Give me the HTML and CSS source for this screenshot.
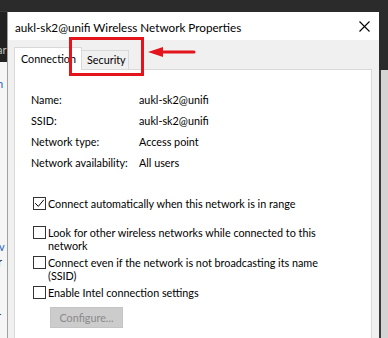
FILE: index.html
```html
<!DOCTYPE html>
<html>
<head>
<meta charset="utf-8">
<link rel="stylesheet" href="styles.css">
</head>
<body>
<div class="desk">
  <div class="bg-left-dark"><span>ar</span></div>
  <div class="bg-left-light">
    <span class="frag blue f1">n</span>
    <span class="frag blue f2">tv</span>
    <span class="frag f3">r</span>
    <span class="frag f4">r</span>
  </div>
  <div class="bg-right"></div>

  <div class="dialog">
    <div class="titlebar">
      <span class="title">aukl-sk2@unifi Wireless Network Properties</span>
      <svg class="close" width="11" height="11" viewBox="0 0 11 11"><path d="M0.5 0.5L10.5 10.5M10.5 0.5L0.5 10.5" stroke="#000" stroke-width="1.1" fill="none"/></svg>
    </div>
    <div class="body">
      <div class="tabs">
        <div class="tab active">Connection</div>
        <div class="tab sec">Security</div>
      </div>
      <div class="panel">
        <div class="info">
          <span>Name:</span><span>aukl-sk2@unifi</span>
          <span>SSID:</span><span>aukl-sk2@unifi</span>
          <span>Network type:</span><span>Access point</span>
          <span>Network availability:</span><span>All users</span>
        </div>
        <div class="checks">
          <div class="check first">
            <span class="box"><svg width="11" height="11" viewBox="0 0 11 11"><path d="M1.2 5.2L4.3 8.4L9.8 1.8" stroke="#000" stroke-width="1" fill="none"/></svg></span>
            <span class="lbl">Connect automatically when this network is in range</span>
          </div>
          <div class="check">
            <span class="box"></span>
            <span class="lbl">Look for other wireless networks while connected to this<br>network</span>
          </div>
          <div class="check">
            <span class="box"></span>
            <span class="lbl">Connect even if the network is not broadcasting its name<br>(SSID)</span>
          </div>
          <div class="check">
            <span class="box"></span>
            <span class="lbl">Enable Intel connection settings</span>
          </div>
        </div>
        <button class="btn" disabled>Configure...</button>
      </div>
    </div>
  </div>

  <div class="highlight"></div>
  <svg class="arrow" width="50" height="14" viewBox="0 0 50 14"><path d="M14 7H47" stroke="#e3141b" stroke-width="3" stroke-linecap="round"/><path d="M1 7L16 2V12Z" fill="#e3141b"/></svg>
</div>
</body>
</html>
```
FILE: styles.css
```css
* { box-sizing: border-box; }
html, body { margin: 0; padding: 0; }
body {
  width: 388px;
  height: 338px;
  overflow: hidden;
  background: #2b2b2b;
  font-family: "Lato", "Segoe UI", sans-serif;
  font-size: 10.8px;
  color: #000;
}
.desk { position: relative; width: 388px; height: 338px; }

.bg-left-dark {
  position: absolute; left: 0; top: 11px; width: 8px; height: 51px;
  background: #222;
  border-top: 1px solid #3a3a3a;
  color: #c4c4c4;
  overflow: hidden;
}
.bg-left-dark span { position: absolute; left: -3px; top: 32px; font-size: 11px; line-height: 12px; }
.bg-left-light {
  position: absolute; left: 0; top: 62px; width: 8px; height: 276px;
  background: #f5f5f5;
  overflow: hidden;
}
.frag { position: absolute; font-size: 11px; line-height: 14px; color: #222; }
.blue { color: #2a63b8; }
.f1 { top: 15px; left: -3px; }
.f2 { top: 178px; left: -5px; }
.f3 { top: 193px; left: -2px; }
.f4 { top: 247px; left: -3px; }
.bg-right {
  position: absolute; left: 379px; top: 70px; width: 9px; height: 268px;
  background: #d4d4d4;
  border-left: 2px solid #3a3a3a;
}

.dialog {
  position: absolute; left: 7px; top: 12px; width: 372px; height: 340px;
  background: #f0f0f0;
  border-left: 1px solid #a0a0a0;
  display: flex; flex-direction: column;
  overflow: hidden;
}
.titlebar {
  flex: none;
  height: 28px;
  background: #fff;
  display: flex; align-items: center; justify-content: space-between;
  padding: 1px 9px 0 7px;
}
.title { font-size: 11.7px; }
.close { display: block; }
.body { flex: 1; min-height: 0; padding: 7px 7px 0 6px; display: flex; flex-direction: column; }
.tabs { flex: none; display: flex; align-items: flex-end; height: 22px; }
.tab {
  height: 19px;
  padding: 0 0 0 5px;
  border: 1px solid #d9d9d9;
  border-bottom: none;
  background: #f0f0f0;
  line-height: 18px;
}
.tab.active {
  width: 68px;
  height: 23px;
  background: #fff;
  padding: 0 0 0 6px;
  line-height: 21px;
  margin-bottom: -1px;
  position: relative;
}
.tab.sec { width: 47px; }
.tab + .tab { border-left: none; }
.panel {
  flex: 1;
  background: #fff;
  border: 1px solid #d9d9d9;
  padding: 22px 0 0 16px;
}
.info {
  display: grid;
  grid-template-columns: 108px auto;
  row-gap: 5px;
  line-height: 16px;
}
.checks { margin-top: 26px; display: flex; flex-direction: column; gap: 4px; }
.check { display: flex; align-items: flex-start; padding-left: 2px; }
.check.first { margin-bottom: 12px; }
.box {
  width: 13px; height: 13px; flex: none;
  border: 1px solid #333;
  background: #fff;
  display: flex; align-items: center; justify-content: center;
}
.box svg { display: block; }
.lbl { margin-left: 2px; line-height: 13px; white-space: nowrap; }
.btn {
  display: block;
  margin: 8px 0 0 19px;
  width: 73px; height: 21px;
  background: #cccccc;
  border: 1px solid #c4c4c4;
  color: #8a8a8a;
  font-family: inherit; font-size: 10.8px;
  padding: 0;
}

.highlight {
  position: absolute; left: 69px; top: 37px; width: 75px; height: 39px;
  border: 3px solid #e3141b;
}
.arrow { position: absolute; left: 147px; top: 45px; }
```
